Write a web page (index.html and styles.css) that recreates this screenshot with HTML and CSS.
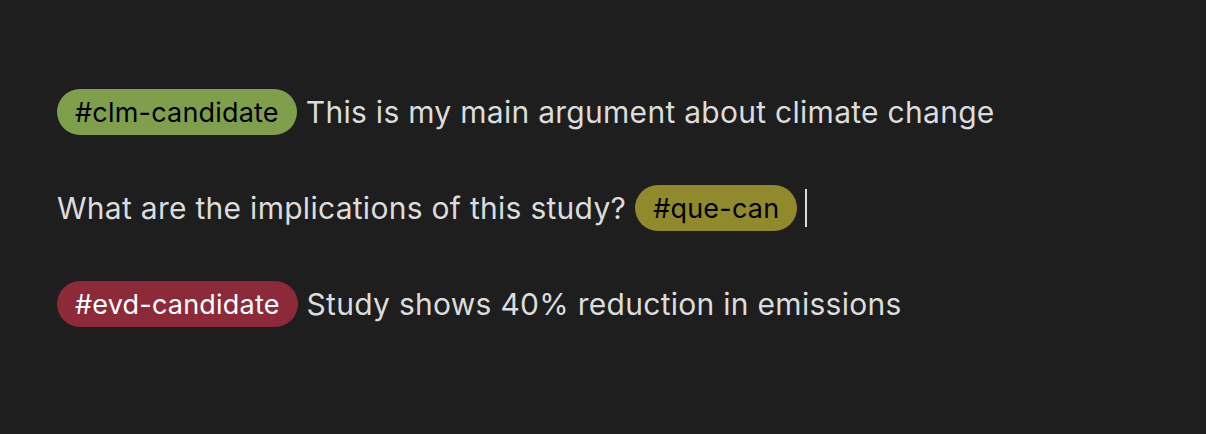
FILE: index.html
```html
<!DOCTYPE html>
<html>
<head>
<meta charset="utf-8">
<link rel="stylesheet" href="styles.css">
</head>
<body>
<div class="editor">
  <p class="line"><span class="tag tag-clm">#clm-candidate</span><span class="text">This is my main argument about climate change</span></p>
  <p class="line"><span class="text">What are the implications of this study?</span><span class="tag tag-que">#que-can</span><span class="cursor"></span></p>
  <p class="line"><span class="tag tag-evd">#evd-candidate</span><span class="text">Study shows 40% reduction in emissions</span></p>
</div>
</body>
</html>
```
FILE: styles.css
```css
html, body {
  margin: 0;
  padding: 0;
  background: #1e1e1e;
  width: 1206px;
  height: 434px;
  overflow: hidden;
}
.editor {
  padding: 89px 0 0 57px;
  display: flex;
  flex-direction: column;
  gap: 50px;
  font-family: Inter, "Noto Sans", sans-serif;
  font-size: 30px;
  letter-spacing: 0.28px;
  color: #dcdcdc;
}
.line {
  margin: 0;
  display: flex;
  align-items: center;
  height: 46px;
  gap: 9px;
}
.text {
  white-space: pre;
}
.tag {
  display: inline-flex;
  align-items: center;
  height: 46px;
  padding: 0 18px;
  border-radius: 23px;
  font-size: 27px;
  letter-spacing: 0.2px;
  color: #000;
  box-sizing: border-box;
}
.tag-clm { background: #809f4c; }
.tag-que { background: #918a2d; margin-right: -1px; }
.tag-evd { background: #8c2a3a; color: #fff; }
.cursor {
  width: 2px;
  height: 38px;
  background: #dcdcdc;
}
```
